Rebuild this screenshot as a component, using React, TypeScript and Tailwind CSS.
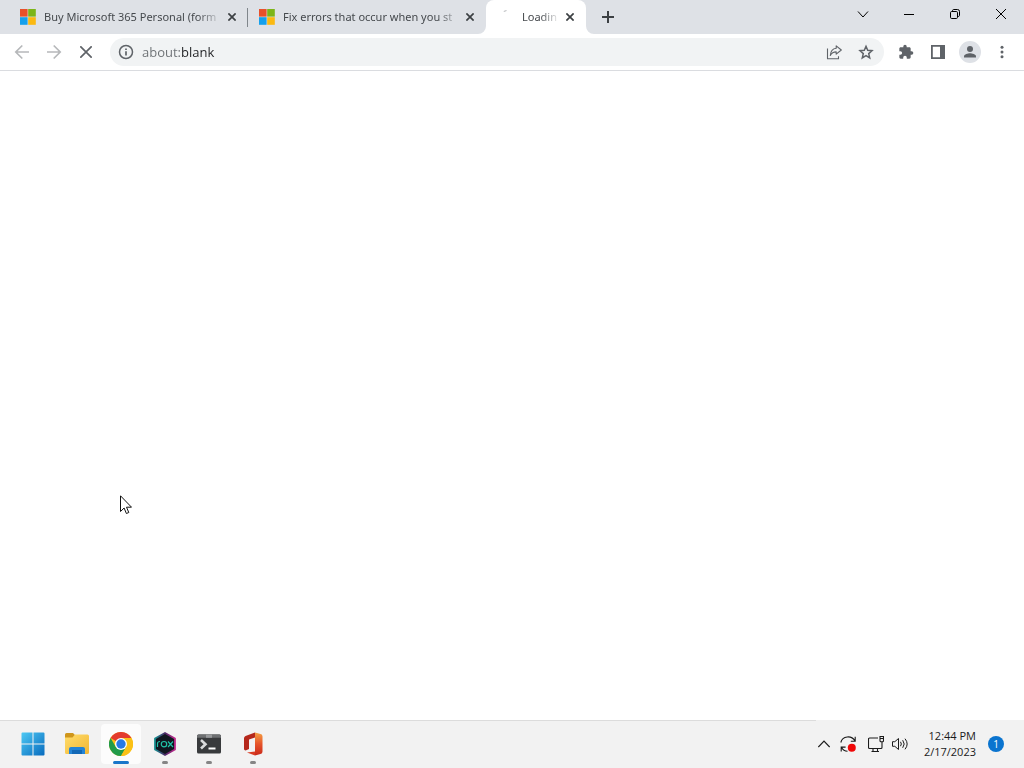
import React from 'react'

interface BrowserTab {
  title: string
  width: string
  divider: boolean
}

const backgroundTabs: BrowserTab[] = [
  { title: 'Buy Microsoft 365 Personal (form', width: 'w-[248px] pl-5', divider: true },
  { title: 'Fix errors that occur when you st', width: 'w-[238px] pl-[11px]', divider: false },
]

function MicrosoftLogo() {
  return (
    <svg className="size-4 shrink-0" viewBox="0 0 16 16" aria-hidden="true">
      <rect width="7.6" height="7.6" fill="#e8502a" />
      <rect x="8.2" width="7.6" height="7.6" fill="#7cb518" />
      <rect y="8.2" width="7.6" height="7.6" fill="#15a0ec" />
      <rect x="8.2" y="8.2" width="7.6" height="7.6" fill="#fbb911" />
    </svg>
  )
}

function TabClose() {
  return (
    <button type="button" aria-label="Close tab" className="flex size-4 shrink-0 items-center justify-center">
      <svg className="size-2" viewBox="0 0 8 8" fill="none" stroke="#3c4043" strokeWidth="1.7">
        <path d="M0.4 0.4 7.6 7.6M7.6 0.4 0.4 7.6" />
      </svg>
    </button>
  )
}

function TabStrip() {
  return (
    <header className="flex h-[34px] bg-[#dee1e6] font-['Noto_Sans','Open_Sans',sans-serif] text-[11px] leading-4 text-[#45494d]">
      {backgroundTabs.map((tab) => (
        <div key={tab.title} className={`relative flex shrink-0 items-center ${tab.width} pr-2`}>
          <MicrosoftLogo />
          <span className="ml-2 w-[180px] whitespace-nowrap [mask-image:linear-gradient(to_right,black_154px,transparent_178px)]">
            {tab.title}
          </span>
          <TabClose />
          {tab.divider && <span className="absolute right-0 top-2 h-[19px] w-px bg-[#80868b]" />}
        </div>
      ))}

      {/* Active tab */}
      <div className="relative flex w-[100px] shrink-0 items-center rounded-t-lg bg-white pl-4">
        <svg className="absolute bottom-0 -left-2 size-2" viewBox="0 0 8 8" fill="white" aria-hidden="true">
          <path d="M8 0v8H0a8 8 0 0 0 8-8z" />
        </svg>
        <svg className="absolute bottom-0 -right-2 size-2" viewBox="0 0 8 8" fill="white" aria-hidden="true">
          <path d="M0 0v8h8a8 8 0 0 1-8-8z" />
        </svg>
        <svg className="size-4 shrink-0" viewBox="0 0 16 16" fill="none" stroke="#b4b7ba" aria-hidden="true">
          <path d="M1.8 2.4 4.5 1.6" />
        </svg>
        <span className="ml-1 w-10 whitespace-nowrap [mask-image:linear-gradient(to_right,black_18px,transparent_38px)]">
          Loadin
        </span>
        <TabClose />
      </div>

      <button type="button" aria-label="New tab" className="ml-2 flex w-7 items-center justify-center">
        <svg className="size-3" viewBox="0 0 12 12" stroke="#3c4043" strokeWidth="2">
          <path d="M6 0v12M0 6h12" />
        </svg>
      </button>

      {/* Window controls */}
      <div className="ml-auto flex h-7 text-black">
        <button type="button" aria-label="Search tabs" className="flex w-[46px] items-center justify-center">
          <svg className="size-3" viewBox="0 0 12 12" fill="none" stroke="currentColor">
            <path d="M1 3.5 6 9l5-5.5" />
          </svg>
        </button>
        <button type="button" aria-label="Minimize" className="flex w-[46px] items-center justify-center">
          <svg className="size-[10px]" viewBox="0 0 10 10" stroke="currentColor">
            <path d="M0 5.5h10" />
          </svg>
        </button>
        <button type="button" aria-label="Restore" className="flex w-[46px] items-center justify-center">
          <svg className="size-[10px]" viewBox="0 0 10 10" fill="none" stroke="currentColor">
            <rect x="0.5" y="2.5" width="7" height="7" rx="1.2" />
            <path d="M2.5 2V1.7C2.5 1 3 .5 3.7.5H7.5a2 2 0 0 1 2 2v3.8c0 .7-.5 1.2-1.2 1.2H8" />
          </svg>
        </button>
        <button type="button" aria-label="Close" className="flex w-[46px] items-center justify-center">
          <svg className="size-[10px]" viewBox="0 0 10 10" stroke="currentColor">
            <path d="M0 0 10 10M10 0 0 10" />
          </svg>
        </button>
      </div>
    </header>
  )
}

function Toolbar() {
  return (
    <div className="flex h-[37px] items-center border-b border-[#dadce0] px-[6px] text-[#5f6368]">
      <button type="button" aria-label="Back" className="flex w-8 justify-center text-[#b6b8ba]">
        <svg className="size-4" viewBox="0 0 16 16" fill="none" stroke="currentColor" strokeWidth="1.7">
          <path d="M15 8H2M8.3 1.5 1.8 8l6.5 6.5" />
        </svg>
      </button>
      <button type="button" aria-label="Forward" className="flex w-8 justify-center text-[#b6b8ba]">
        <svg className="size-4" viewBox="0 0 16 16" fill="none" stroke="currentColor" strokeWidth="1.7">
          <path d="M1 8h13M7.7 1.5 14.2 8l-6.5 6.5" />
        </svg>
      </button>
      <button type="button" aria-label="Stop loading" className="flex w-8 justify-center">
        <svg className="size-3" viewBox="0 0 12 12" stroke="currentColor" strokeWidth="1.7">
          <path d="M.3.3 11.7 11.7M11.7.3.3 11.7" />
        </svg>
      </button>

      {/* Address bar */}
      <div className="ml-2 flex h-7 flex-1 items-center rounded-full bg-[#f1f3f4] pl-2 pr-[2px]">
        <button type="button" aria-label="View site information" className="flex size-4 shrink-0">
          <svg className="size-4" viewBox="0 0 16 16" fill="none" stroke="currentColor" strokeWidth="1.5">
            <circle cx="8" cy="8" r="6.5" />
            <path d="M8 7.2v4.2M8 4.4v1.6" strokeWidth="1.7" />
          </svg>
        </button>
        <input
          type="text"
          aria-label="Address and search bar"
          defaultValue="about:blank"
          className="ml-2 min-w-0 flex-1 bg-[linear-gradient(to_right,#6b6f73_39px,#202124_39px)] bg-clip-text text-[13px] leading-5 text-transparent outline-none"
        />
        <button type="button" aria-label="Share this page" className="flex w-8 justify-center">
          <svg className="size-4" viewBox="0 0 16 16" fill="none" stroke="currentColor" strokeWidth="1.1" strokeLinejoin="round">
            <path d="M1.5 4.5v10.3h11V12.2" />
            <path d="M10.200 1.800 15.300 6 10.200 10.200V7.900C7.500 7.900 5.600 9 4.300 11.500 4.600 7.500 6.500 4.700 10.200 4.300z" />
          </svg>
        </button>
        <button type="button" aria-label="Bookmark this tab" className="flex w-8 justify-center">
          <svg className="size-4" viewBox="0 0 16 16" fill="none" stroke="currentColor" strokeWidth="1.5">
            <path d="m8 2.300 1.700 4 4.300.4-3.300 2.900 1 4.300L8 11.600l-3.700 2.300 1-4.300L2 6.700l4.300-.4z" />
          </svg>
        </button>
      </div>

      <button type="button" aria-label="Extensions" className="ml-[6px] flex w-8 justify-center">
        <svg className="size-4" viewBox="0 0 24 24" fill="currentColor">
          <path d="M20.5 11H19V7c0-1.100-.9-2-2-2h-4V3.500a2.500 2.500 0 0 0-5 0V5H4c-1.100 0-2 .9-2 2v3.800h1.500a2.700 2.700 0 0 1 0 5.400H2V20c0 1.100.9 2 2 2h3.800v-1.500a2.700 2.700 0 0 1 5.400 0V22H17c1.100 0 2-.9 2-2v-4h1.500a2.500 2.500 0 0 0 0-5z" />
        </svg>
      </button>
      <button type="button" aria-label="Side panel" className="flex w-8 justify-center">
        <svg className="size-4" viewBox="0 0 16 16" fill="currentColor">
          <path d="M1 1h14v14H1zM2.800 2.800v10.400H10V2.800z" fillRule="evenodd" />
        </svg>
      </button>
      <button type="button" aria-label="Profile" className="flex w-8 justify-center">
        <svg className="size-[22px]" viewBox="0 0 22 22" fill="currentColor">
          <circle cx="11" cy="11" r="11" fill="#dee1e6" />
          <circle cx="11" cy="8" r="3" />
          <path d="M5 16.500v-1.300c0-2 4-3 6-3s6 1 6 3v1.300z" />
        </svg>
      </button>
      <button type="button" aria-label="Browser menu" className="flex w-8 justify-center">
        <svg className="size-4" viewBox="0 0 16 16" fill="currentColor">
          <circle cx="8" cy="3.200" r="1.500" />
          <circle cx="8" cy="8" r="1.500" />
          <circle cx="8" cy="12.800" r="1.500" />
        </svg>
      </button>
    </div>
  )
}

function StartIcon() {
  return (
    <svg className="size-6" viewBox="0 0 24 24">
      <defs>
        <linearGradient id="start" x1="0" y1="0" x2="24" y2="24" gradientUnits="userSpaceOnUse">
          <stop stopColor="#4fcbf5" />
          <stop offset="1" stopColor="#0669bd" />
        </linearGradient>
      </defs>
      <path fill="url(#start)" d="M1.500.5h10v11H.5v-10a1 1 0 0 1 1-1zM12.500.5h10a1 1 0 0 1 1 1v10h-11zM.5 12.500h11v11h-10a1 1 0 0 1-1-1zM12.500 12.500h11v10a1 1 0 0 1-1 1h-10z" />
    </svg>
  )
}

function FolderIcon() {
  return (
    <svg className="size-6" viewBox="0 0 24 24">
      <defs>
        <linearGradient id="folder" x1="0" y1="0" x2="1" y2="1">
          <stop stopColor="#ffdd6b" />
          <stop offset="1" stopColor="#f2b634" />
        </linearGradient>
      </defs>
      <path fill="#cf961c" d="M0 2.500A1.500 1.500 0 0 1 1.500 1H8l2.500 2.500V8H0z" />
      <path fill="url(#folder)" d="M0 5.500h7.500L10 2.500h12.500A1.500 1.500 0 0 1 24 4v16.500a1.500 1.500 0 0 1-1.500 1.500h-21A1.500 1.500 0 0 1 0 20.500z" />
      <path fill="#2384d6" d="M4 22v-5a2 2 0 0 1 2-2h12a2 2 0 0 1 2 2v5z" />
      <path fill="#1268b6" d="M7 18h10v4H7z" />
    </svg>
  )
}

function ChromeIcon() {
  return (
    <svg className="size-6" viewBox="0 0 24 24">
      <circle cx="12" cy="12" r="12" fill="#fbc116" />
      <path fill="#e33b2e" d="M12 12 1.600 6A12 12 0 0 1 22.400 6H12z" />
      <path fill="#229b4a" d="M1.600 6A12 12 0 0 0 12 24l5.200-9L12 12 6.800 15z" />
      <path fill="#fbc116" d="M22.400 6A12 12 0 0 1 12 24l5.200-9A6 6 0 0 0 12 6z" />
      <circle cx="12" cy="12" r="6" fill="white" />
      <circle cx="12" cy="12" r="4.700" fill="#2879e6" />
    </svg>
  )
}

function RoxIcon() {
  return (
    <svg className="size-6" viewBox="0 0 24 24">
      <defs>
        <linearGradient id="rox" x1="0" y1="0" x2="1" y2="0">
          <stop stopColor="#168f90" />
          <stop offset="0.5" stopColor="#4b2a67" />
          <stop offset="1" stopColor="#c32b8e" />
        </linearGradient>
      </defs>
      <path d="M12 1 22 6.500v11L12 23 2 17.500v-11z" fill="#10161f" stroke="url(#rox)" strokeWidth="1.800" strokeLinejoin="round" />
      {/* r, o, x strokes of the mark */}
      <g fill="none" stroke="#21c2a6" strokeWidth="1.200">
        <path d="M4.500 15v-3.500q0-2 2.500-2" />
        <circle cx="11" cy="12.200" r="2.700" />
        <path d="m15 9.500 5 5.500m0-5.500L15 15" />
      </g>
    </svg>
  )
}

function TerminalIcon() {
  return (
    <svg className="size-6" viewBox="0 0 24 24">
      <rect y="2.500" width="24" height="19" rx="1.500" fill="#383a3c" />
      <path fill="#6e7072" d="M1.500 2.500h21A1.500 1.500 0 0 1 24 4v1.800H0V4a1.500 1.500 0 0 1 1.500-1.500z" />
      <path fill="#97999b" d="M9 2.500h6v3.300H9z" />
      <path d="m4 8 4.500 4.200L4 16.500" fill="none" stroke="#d9dadb" strokeWidth="2.600" />
      <path d="M11.500 16.500h7" stroke="white" strokeWidth="2" />
    </svg>
  )
}

function OfficeIcon() {
  return (
    <svg className="size-6" viewBox="0 0 24 24">
      <defs>
        <linearGradient id="office" x1="0" y1="0" x2="0" y2="1">
          <stop stopColor="#f5a044" />
          <stop offset="0.5" stopColor="#e6542a" />
          <stop offset="1" stopColor="#c9271a" />
        </linearGradient>
      </defs>
      <path fill="#b5281c" d="M14 .5 4.500 4A2.500 2.500 0 0 0 3 6.300v10.500c0 1.500 1.500 2 2.800 1.300L8 17V7.500l6-2z" />
      <path fill="url(#office)" d="M14 .5 19.500 2A2.500 2.500 0 0 1 21.500 4.500v15a2.500 2.500 0 0 1-2 2.500L14 23.500z" />
      <path fill="#d93b23" d="M6 20.500l8-1v4z" />
    </svg>
  )
}

const apps = [
  { name: 'Start', icon: <StartIcon />, indicator: '', tile: '' },
  { name: 'File Explorer', icon: <FolderIcon />, indicator: '', tile: '' },
  { name: 'Google Chrome', icon: <ChromeIcon />, indicator: 'w-4 bg-[#1976c9]', tile: 'bg-[#fcfcfc]' },
  { name: 'Rox', icon: <RoxIcon />, indicator: 'w-[6px] bg-[#858585]', tile: '' },
  { name: 'Terminal', icon: <TerminalIcon />, indicator: 'w-[6px] bg-[#858585]', tile: '' },
  { name: 'Office', icon: <OfficeIcon />, indicator: 'w-[6px] bg-[#858585]', tile: '' },
]

function Taskbar() {
  return (
    <footer className="flex h-12 bg-[#f2f2f2] text-[11px] leading-4 text-[#1b1b1b]">
      <nav className="flex flex-1 items-start gap-1 border-t border-[#dcdcdc] pl-[13px] pt-[3px]">
        {apps.map((app) => (
          <button
            key={app.name}
            type="button"
            aria-label={app.name}
            className={`relative flex size-10 items-center justify-center rounded ${app.tile}`}
          >
            {app.icon}
            {app.indicator && <span className={`absolute bottom-0 h-[3px] rounded-full ${app.indicator}`} />}
          </button>
        ))}
      </nav>

      {/* System tray */}
      <div className="flex items-center pr-5">
        <button type="button" aria-label="Show hidden icons" className="flex w-4 justify-center">
          <svg className="size-3" viewBox="0 0 12 12" fill="none" stroke="currentColor" strokeWidth="1.200">
            <path d="m.3 9 5.700-6 5.700 6" />
          </svg>
        </button>
        <button type="button" aria-label="Windows Update" className="ml-2 flex">
          <svg className="size-4" viewBox="0 0 16 16" fill="none" stroke="currentColor" strokeWidth="1.100">
            <path d="M.8 6.500C2.500-.2 11.500-1 14.800 4.800M15.200.8v4.400h-4.400M7.500 15.200C5 15.200 2.800 13.800 1.600 11.400M1.200 15.500v-4.400h4.400" />
            <circle cx="11.800" cy="11.800" r="4" fill="#f00808" stroke="none" />
          </svg>
        </button>
        <button type="button" aria-label="Network" className="ml-3 flex">
          <svg className="size-4" viewBox="0 0 16 16" fill="none" stroke="currentColor" strokeWidth="1.100">
            <path d="M10 2H1.500a1 1 0 0 0-1 1v8.500a1 1 0 0 0 1 1H13a1 1 0 0 0 1-1V6M5 12.500v3M9.500 12.500v3M3.500 15.500H11" />
            <path d="M12 .5h3.500v4.200a1 1 0 0 1-1 1H13a1 1 0 0 1-1-1zM12 2.500h3.500" />
          </svg>
        </button>
        <button type="button" aria-label="Volume" className="ml-2 flex">
          <svg className="size-4" viewBox="0 0 16 16" fill="none" stroke="currentColor" strokeLinejoin="round">
            <path d="M.5 5.700h2.300L6.500 2.500v11l-3.700-3.200H.5z" />
            <path d="M8.500 5.800q1.700 2.200 0 4.400M10.700 4.200q3 3.800 0 7.600M13 2.700q4.300 5.300 0 10.600" />
          </svg>
        </button>
        <button type="button" className="ml-4 text-right">
          <time className="block">12:44 PM</time>
          <time className="block">2/17/2023</time>
        </button>
        <button
          type="button"
          aria-label="1 notification"
          className="ml-3 flex size-4 items-center justify-center rounded-full bg-[#0a74cf] text-[10px] text-white"
        >
          1
        </button>
      </div>
    </footer>
  )
}

export default function App() {
  return (
    <div className="flex min-h-screen flex-col overflow-hidden bg-white font-['Open_Sans','Noto_Sans',sans-serif]">
      <TabStrip />
      <Toolbar />
      <main className="relative flex-1">
        {/* Mouse pointer */}
        <svg className="absolute left-[120px] top-[424px] h-5 w-3" viewBox="0 0 12 20" fill="white" stroke="#111" aria-hidden="true">
          <path d="M.5.8v15.700l3.600-3.500 2.300 5.500 2.400-1-2.300-5.300h5z" />
        </svg>
      </main>
      <Taskbar />
    </div>
  )
}
